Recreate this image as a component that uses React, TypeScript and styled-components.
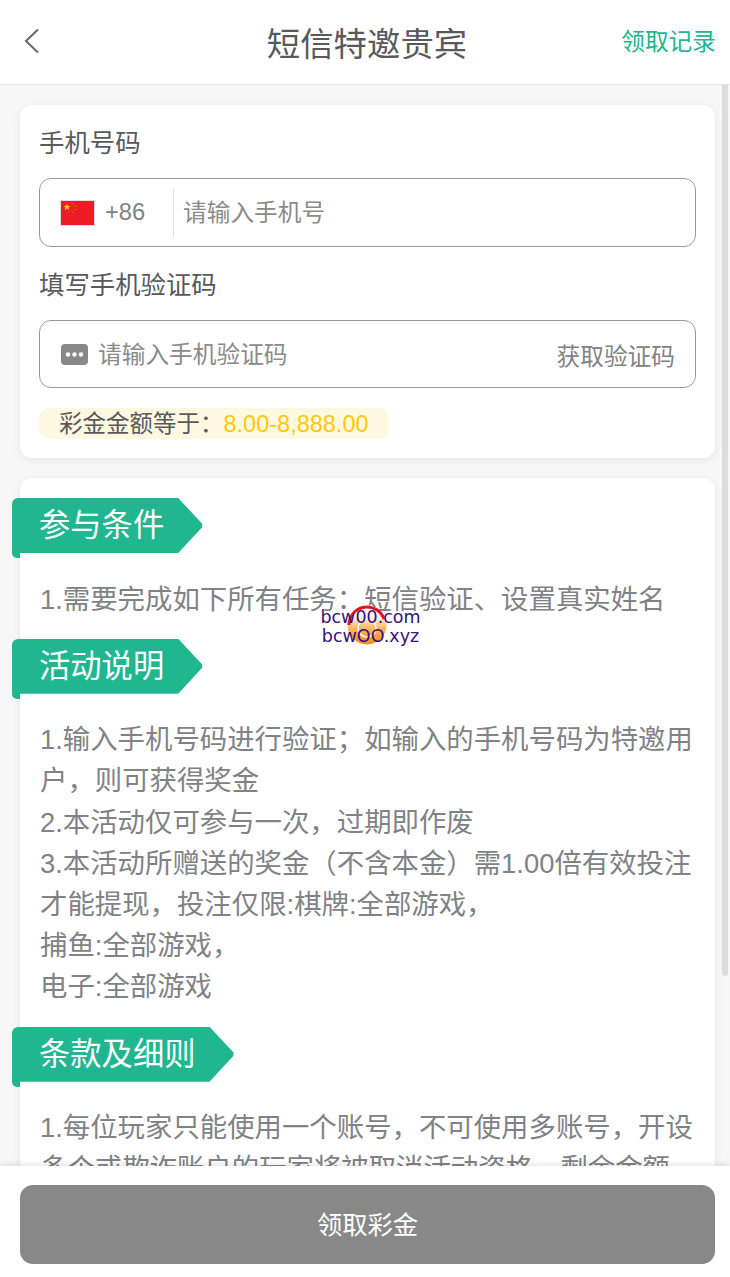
import styled, {createGlobalStyle} from "styled-components";

const GlobalStyle = createGlobalStyle`
    html, body {
        margin: 0;
        padding: 0;
        height: 100%;
        overflow: hidden;
    }

    body {
        font-family: "Liberation Sans", "Noto Sans CJK SC", sans-serif;
        background: #f7f7f7;
    }

    * {
        box-sizing: border-box;
    }
`;

const Page = styled.div`
    width: 730px;
    height: 1277px;
    display: flex;
    flex-direction: column;
    position: relative;
    overflow: hidden;
    background: #f7f7f7;
`;

const Header = styled.header`
    height: 85px;
    flex: none;
    display: grid;
    grid-template-columns: 1fr auto 1fr;
    align-items: center;
    padding: 0 14px 0 21px;
    background: #fff;
    border-bottom: 1px solid #e3e3e3;
`;

const BackButton = styled.div`
    display: flex;
    margin-top: -3px;
`;

const Title = styled.h1`
    margin: 0 3px 2px 0;
    font-size: 33.4px;
    font-weight: 400;
    color: #58595b;
`;

const RecordLink = styled.span`
    justify-self: end;
    margin-bottom: 4px;
    font-size: 23.7px;
    color: #20b68f;
`;

const Scroller = styled.main`
    flex: 1;
    min-height: 0;
    overflow: hidden;
    padding: 20px 15px 0 20px;
    display: flex;
    flex-direction: column;
    gap: 20px;
`;

const Card = styled.section`
    flex: none;
    background: #fff;
    border-radius: 12px;
    box-shadow: 0 2px 8px rgba(0, 0, 0, 0.08);
`;

const FormCard = styled(Card)`
    height: 353px;
    padding: 20px 19px 0 19px;
`;

const FieldLabel = styled.div`
    font-size: 25.4px;
    line-height: 36px;
    color: #58595b;
    margin-bottom: 17px;
`;

const Field = styled.div<{$gap: number; $height: number}>`
    height: ${p => p.$height}px;
    display: flex;
    align-items: center;
    border: 1px solid #999;
    border-radius: 12px;
    margin-bottom: ${p => p.$gap}px;
`;

const CountryCode = styled.div`
    width: 134px;
    height: 50px;
    flex: none;
    display: flex;
    align-items: center;
    gap: 10px;
    padding-left: 20px;
    border-right: 1px solid #e3e3e3;
    font-size: 23.7px;
    color: #808285;
`;

const Placeholder = styled.span`
    flex: 1;
    font-size: 23.7px;
    color: #8a8a8a;
    margin: 0 0 3px 10px;
`;

const PhonePlaceholder = styled(Placeholder)`
    margin-left: 9px;
`;

const SmsIcon = styled.div`
    flex: none;
    display: flex;
    margin-left: 21px;
`;

const CodeButton = styled.span`
    font-size: 23.7px;
    color: #808285;
    margin: 2px 20px 0 0;
`;

const Bonus = styled.div`
    display: inline-block;
    height: 31px;
    line-height: 33px;
    padding: 0 20px 0 20px;
    border-radius: 10px;
    background: #fff8e1;
    font-size: 23.5px;
    color: #58595b;
`;

const BonusValue = styled.span`
    color: #ffc800;
`;

const InfoCard = styled(Card)`
    padding: 20px 18px 0 20px;
    height: 900px;
`;

const Section = styled.div`
    margin-bottom: 19px;
`;

const RibbonWrap = styled.div`
    position: relative;
    margin-bottom: 25.5px;

    &::before {
        content: "";
        position: absolute;
        left: -28px;
        top: 0;
        width: 8px;
        height: 60px;
        background: #20b68f;
        border-radius: 6px 0 0 5px;
    }
`;

const Ribbon = styled.div`
    width: fit-content;
    height: 55px;
    margin-left: -20px;
    padding: 0 39px 6px 19px;
    display: flex;
    align-items: center;
    font-size: 31.3px;
    color: #fff;
    background: #20b68f;
    clip-path: polygon(0 0, calc(100% - 25px) 0, calc(100% - 1px) 47%, calc(100% - 1px) 53%, calc(100% - 25px) 100%, 0 100%);
`;

const Body = styled.div`
    font-size: 27.4px;
    line-height: 41.2px;
    color: #808285;
`;

const Line = styled.div``;

const Scrollbar = styled.div`
    position: absolute;
    top: 85px;
    right: 2px;
    width: 6px;
    height: 891px;
    background: #dcdcdc;
    border-radius: 0 0 3px 3px;
`;

const Watermark = styled.div`
    position: absolute;
    left: 320px;
    top: 608px;
    width: 101px;
    font-family: "DejaVu Sans", sans-serif;
    font-size: 17.5px;
    line-height: 19px;
    color: #37107a;
    white-space: nowrap;
    text-align: center;
`;

const WatermarkLogo = styled.svg`
    position: absolute;
    left: 26px;
    top: -4px;
`;

const WatermarkText = styled.div`
    position: relative;
`;

const Footer = styled.footer`
    position: absolute;
    left: 0;
    right: 0;
    bottom: 0;
    height: 111px;
    padding: 19px 15px 0 20px;
    background: #fff;
    box-shadow: 0 -2px 6px rgba(0, 0, 0, 0.1);
`;

const ClaimButton = styled.button`
    width: 695px;
    height: 79px;
    display: block;
    border: 0;
    border-radius: 13px;
    padding: 0 0 4px;
    background: #888;
    color: #fff;
    font-family: inherit;
    font-size: 25.3px;
`;

const sections = [
    {
        title: "参与条件",
        lines: ["1.需要完成如下所有任务：短信验证、设置真实姓名"],
    },
    {
        title: "活动说明",
        lines: [
            "1.输入手机号码进行验证；如输入的手机号码为特邀用户，则可获得奖金",
            "2.本活动仅可参与一次，过期即作废",
            "3.本活动所赠送的奖金（不含本金）需1.00倍有效投注才能提现，投注仅限:棋牌:全部游戏，",
            "捕鱼:全部游戏，",
            "电子:全部游戏",
        ],
    },
    {
        title: "条款及细则",
        lines: ["1.每位玩家只能使用一个账号，不可使用多账号，开设多个或欺诈账户的玩家将被取消活动资格，剩余金额"],
    },
];

const Flag = () => (
    <svg width="35" height="26" viewBox="0 0 35 26">
        <rect x="0.5" y="0.5" width="34" height="25" fill="#ee1c25" stroke="#ddd" />
        <polygon points="7,3.5 7.9,6 10.5,6 8.4,7.6 9.2,10.2 7,8.6 4.8,10.2 5.6,7.6 3.5,6 6.1,6" fill="#ffde00" />
        <circle cx="13" cy="3.5" r="0.6" fill="#f6b500" />
        <circle cx="15.7" cy="6" r="0.6" fill="#f6b500" />
        <circle cx="15.7" cy="9.5" r="0.6" fill="#f6b500" />
        <circle cx="13" cy="12" r="0.6" fill="#f6b500" />
    </svg>
);

const Sms = () => (
    <svg width="27" height="21" viewBox="0 0 27 21">
        <rect width="27" height="21" rx="4" fill="#888" />
        <circle cx="7" cy="10.5" r="2.2" fill="#fff" />
        <circle cx="13.5" cy="10.5" r="2.2" fill="#fff" />
        <circle cx="20" cy="10.5" r="2.2" fill="#fff" />
    </svg>
);

export default function App() {
    return (
        <Page>
            <GlobalStyle />
            <Header>
                <BackButton>
                    <svg width="20" height="26" viewBox="0 0 20 26" fill="none">
                        <path d="M17 1.5 L5 13 L17 24.5" stroke="#6d6e71" strokeWidth="2.2" />
                    </svg>
                </BackButton>
                <Title>短信特邀贵宾</Title>
                <RecordLink>领取记录</RecordLink>
            </Header>
            <Scroller>
                <FormCard>
                    <FieldLabel>手机号码</FieldLabel>
                    <Field $gap={20} $height={69}>
                        <CountryCode>
                            <Flag />
                            +86
                        </CountryCode>
                        <PhonePlaceholder>请输入手机号</PhonePlaceholder>
                    </Field>
                    <FieldLabel>填写手机验证码</FieldLabel>
                    <Field $gap={20} $height={68}>
                        <SmsIcon><Sms /></SmsIcon>
                        <Placeholder>请输入手机验证码</Placeholder>
                        <CodeButton>获取验证码</CodeButton>
                    </Field>
                    <Bonus>彩金金额等于：<BonusValue>8.00-8,888.00</BonusValue></Bonus>
                </FormCard>
                <InfoCard>
                    {sections.map(section => (
                        <Section key={section.title}>
                            <RibbonWrap>
                                <Ribbon>{section.title}</Ribbon>
                            </RibbonWrap>
                            <Body>
                                {section.lines.map(line => <Line key={line}>{line}</Line>)}
                            </Body>
                        </Section>
                    ))}
                </InfoCard>
            </Scroller>
            <Scrollbar />
            <Watermark>
                <WatermarkLogo width="42" height="42" viewBox="0 0 42 42">
                    <defs>
                        <linearGradient id="wm" x1="0" y1="0" x2="0" y2="1">
                            <stop offset="0.25" stopColor="#fff" />
                            <stop offset="0.6" stopColor="#f9b45a" />
                            <stop offset="1" stopColor="#f58a14" />
                        </linearGradient>
                    </defs>
                    <circle cx="21" cy="21" r="19.5" fill="url(#wm)" />
                    <path d="M3 21a18 18 0 0 1 35-6" fill="none" stroke="#e2141c" strokeWidth="3" />
                    <circle cx="21" cy="24" r="9" fill="none" stroke="#fff" strokeWidth="1.5" />
                </WatermarkLogo>
                <WatermarkText>bcw00.com</WatermarkText>
                <WatermarkText>bcwOO.xyz</WatermarkText>
            </Watermark>
            <Footer>
                <ClaimButton>领取彩金</ClaimButton>
            </Footer>
        </Page>
    );
}
